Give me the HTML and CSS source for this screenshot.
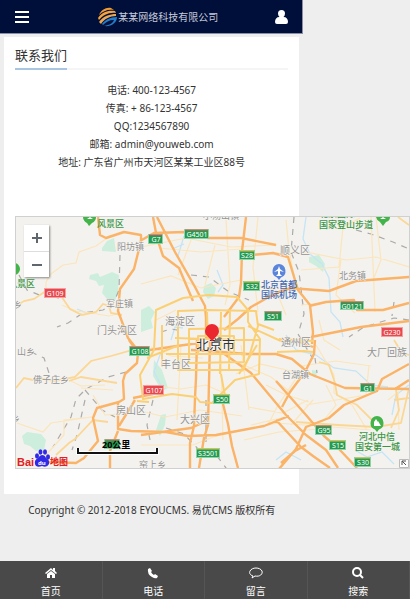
FILE: index.html
```
<!DOCTYPE html>
<html lang="zh-CN">
<head>
    <meta charset="UTF-8">
    <meta name="viewport" content="width=device-width, initial-scale=1.0">
    <title>联系我们</title>
    <link rel="stylesheet" href="styles.css">
</head>
<body>
    <header class="header">
        <button class="iconBtn" aria-label="菜单">
            <svg width="14" height="12" viewBox="0 0 14 12"><path d="M0 1h14M0 6h14M0 11h14" stroke="#fff" stroke-width="2"/></svg>
        </button>
        <a class="logo" href="#">
            <svg width="20" height="20" viewBox="0 0 20 20">
                <path d="M1 8C3 3 8 0 13 1L16 3C10 2 5 4 1 8z" fill="#ef9c35"/>
                <path d="M0 11C4 5 10 3 17 4l1 2C11 5 5 8 1 13z" fill="#f5a33a"/>
                <path d="M1 15C5 9 12 7 18 7v2C12 9 6 12 3 17z" fill="#e9a653"/>
                <path d="M4 17c3-4 8-7 15-7 0 6-6 10-13 9 6-1 9-3 10-6-5 0-8 2-11 5z" fill="#247cc6"/>
            </svg>
            <span>某某网络科技有限公司</span>
        </a>
        <a class="user" href="#" aria-label="会员">
            <svg width="13" height="14" viewBox="0 0 13 14"><path d="M6.500 0a3.500 3.500 0 0 1 3.500 3.500q0 2-1.500 3.500C11.500 7 13 9 13 12q0 2-2 2H2q-2 0-2-2C0 9 1.500 7 4.500 7Q3 5.500 3 3.500a3.500 3.500 0 0 1 3.500-3.500z" fill="#fff"/></svg>
        </a>
    </header>

    <main class="card">
        <div class="titleBar"><h1>联系我们</h1></div>
        <div class="contact">
            <p>电话: 400-123-4567</p>
            <p>传真: + 86-123-4567</p>
            <p>QQ:1234567890</p>
            <p>邮箱: admin@youweb.com</p>
            <p>地址: 广东省广州市天河区某某工业区88号</p>
        </div>

        <div class="map">
            <svg class="mapCanvas" viewBox="15 217 393 251">
                <!-- 绿地和水系 -->
                <g fill="#cdeedd">
                    <path d="M101 248l5-7 7-3 2 14-14-1zM89 275l8-2 2 4 12-5 7 3-1 18-3 8-8-2-5-6 2-8-5 1-3-5-7-2zM21 436l5-4 14 2 5 6-2 10-8 1-6-5-6-2zM140 310l8-4 6 6-4 8 2 8-12 4zM203 286l7-3 5 5-2 8-6 3-5-7zM308 257l10-2 6 9-2 8-7-6-7-4zM155 430l5-15 5-1-1 11-5 11zM153 360l8 10 6 18-6 3-9-15zM311 370l5 1-1 7-4-2z"/>
                </g>
                <g fill="none" stroke="#c5e4f5" stroke-width="1.300">
                    <path d="M305 217l-3 22 7 15 12 10 7 14 2 34 9 10 3 15M285 335l10 15 20 5 18 13 22 3 15 14 17 2M408 385l-13 10-4 20M76 309l10 4 7 0M160 352l-7 20 8 15M171 249l12-5"/>
                    <path d="M170 340l4-13 8 1M275 460l10-8 15 8M354 450l12 7 15-5 12 12M183 236l-6 20M216 270l6 15-5 7"/>
                </g>
                <!-- 铁路 -->
                <g fill="none" stroke="#aaa" stroke-width="1.200" stroke-dasharray="6 6">
                    <path d="M119 255l-1 35-6 14-10 6-20 3-15 10-11 4M18 275l8 15 15 6 17 2M30 352l13 6 5 15 8 4M125 372l-18 5-22 12-10 10-5 18-12 20-6 10M84 400l-8 35-5 15M84 390l17 20 13 7M190 275l18 2 20 15 20 8M293 217l-3 35 8 20 5 42-6 20 15 25M355 230l15 4 22 8 16 7M408 320l-15-2-30 9-15 10M152 400l-6 25 3 15M165 428l18 6 15 16 18 6 15 20M160 332l10-3 12 2M205 400l0 50M314 358l2 15M393 302l-2 14"/>
                </g>
                <!-- 县道 -->
                <g fill="none" stroke="#fbe5bb" stroke-width="1.200">
                    <path d="M110 235l-15 11-17 6-3 11-13 2-12 9-5 8 0 8M61 305l14 6 15 2 18 3 8-2M16 423l26 9 8-9 40-6M45 455l18-20 0-15 28-3M70 381l10 5 24-1M80 388l32 2M92 395l12 20 15-1M140 247l45-9 45 9 46-2M140 284l30-8 30 12 40-8M158 248l42 4 40-3M190 240l-13 35M214 245l-10 40M225 220l4 65-5 20M257 217l-5 50 5 45M250 285l25 5 10 25M275 253l35 0 35 7 30-3 33 10M285 220l3 30 6 30M300 270l38-3 4-40 17-9M340 260l-5 35 19 18M375 217l5 43-8 20M300 305l50-5M318 320l5 20 16 10M155 320l20-10M150 347l20 9 32 2M145 385l35 4 25-4 25 11M144 412l20 5 35-7 42 6M140 445l52 0 20-8 35-8 30-6M240 345l8 65M220 360l2 80M180 345l-4 75M235 374l24-10 40 9M238 363l32 14 18 14M265 385l20 10 23 7M247 407l35 6 25-13M250 425l34-8M267 425l9-18 28-42M243 440l35-8 40-3M300 366l35-5 35 5M305 405l60-10 3-30M290 425l22-25M325 385l10 20-12 15M315 345l18 30 0 18 18 12 15 25M370 430l-25-2-70-5M370 217l4 95M398 430l-1-38-10 8"/>
                </g>
                <g fill="none" stroke="#fbd796" stroke-width="1.800">
                    <path d="M15 306l8-5 10-2 12-8 13 2 11 16 12 6 14-3 7-8 6 2 2 7 11 2M15 388l8-10 9 2 5-2 17 3 20-4 16-16 20-5 18-5 10 5M68 381l12-4 36 6M55 455l13-12 6-4 18-19 15 2M318 362l10 3 6 18 2 12 20 10 15 15M295 422l42 3 38 2 25-4 8-35M395 390l3 20-8 18M393 400l15-2M397 217l11 8M393 340l8 13 7 2"/>
                </g>
                <!-- 高速公路 -->
                <g fill="none" stroke="#fab367" stroke-width="2.400" stroke-linejoin="round">
                    <path d="M97 217l2 18 6 3 18-6 17 3 0 6-7 28-14 20-2 22 10 27 8 10M139 241l14-8 31-1 23 6 33 0 35 7M152 217l4 21 6 18 16 12 14 33M156 217l18 35 20 35 10 19 1 12 0 22M245 217l-4 34-1 32-2 14-15 20M240 256l22-2 10-1 15 4 10 33 12 15 3 27-1 12M223 330l14-11 13-12 16-9 12-6 12-4 12 1 26 2 27-10 54-4M308 306l17-4 28-2 3 10 26 0 26-7M310 337l25-5 25-5 48-6"/>
                    <path d="M128 340l9 13-1 10-12 11-2 7 1 18-5 3-22 6-4 10 5 23-14 17-8 5-27-1M117 402l0 27 13 2 35 1 22 4 28-1 48-9 25-10M117 431l-8 20 0 17M134 400l-16 26M140 435l50-7 18-8M142 351l34-5 22-3M132 398l20-4M196 340l-1 38-1 20-1 28-4 17 0 25M209 340l-2 85-4 13-5 30M222 404l5 20 4 22 6 22M222 353l28 20 20 24 15 18 20 20 20 15 12 18M240 354l35 0 16 5 18 15 35 14 64 1M314 340l-1 14-9 18-15 20-8 15M275 381l30 34 18 21 15 13 18 19M275 420l25 27 12 9 17 12M408 364l-27 15-5 12-33 14-15 13-23 9-10 22-17 20M281 340l15 1 16 6M408 380l-14 9M280 463l14-12 11-6M190 350l18 1 38 3"/>
                </g>
                <!-- 环路 -->
                <g fill="none" stroke="#fbd074" stroke-width="2" stroke-linejoin="round">
                    <path d="M153 350l2-40 27-12 25-3 29 2 11 13 0 12 12 17-1 35-24 6-23 23-12-1-4-5-24-3-29 5-3-24zM177 311l30-1 48 1 2 15-9 31-6 13-65 0zM188 329l55-1 0 34-55 1zM197 336h36v18h-36zM174 338l30 1 54 1M206 312l1 28M161 367l0-42M220 312l-1 62M229 310l-1 60M165 354l80 0M257 324l16 6M247 326l35 16 25-2M146 358l30-12M148 402l-12-1"/>
                    <path d="M276 352l27-1 9 1M278 339l34 2M220 374l5 28M256 345l-18 29"/>
                </g>
                <!-- 路牌 -->
                <g class="sign">
                    <g fill="#259b50" stroke="#8fd1a8"><rect x="147.500" y="234.500" width="14" height="9"/><rect x="183.500" y="229.500" width="24" height="9"/><rect x="238.500" y="250.500" width="15" height="9"/><rect x="242.500" y="281.500" width="16" height="9"/><rect x="263.500" y="311.500" width="17" height="9"/><rect x="339.500" y="301.500" width="23" height="8"/><rect x="128.500" y="346.500" width="20" height="9"/><rect x="212.500" y="394.500" width="16" height="9"/><rect x="195.500" y="448.500" width="23" height="9"/><rect x="359.500" y="383.500" width="14" height="8"/><rect x="314.500" y="425.500" width="16" height="9"/><rect x="328.500" y="440.500" width="16" height="9"/><rect x="353.500" y="457.500" width="16" height="9"/><rect x="103.500" y="439.500" width="15" height="9"/></g>
                    <g fill="#e8484e" stroke="#f2a0a2"><rect x="43.500" y="288.500" width="21" height="9"/><rect x="142.500" y="385.500" width="20" height="9"/><rect x="380.500" y="327.500" width="21" height="9"/></g>
                    <path d="M148 235h13M184 230h23M264 312h16M340 302h22M129 347h19M360 384h13M315 426h15M104 440h14" stroke="#dd5753"/>
                    <path d="M239 251h14M243 282h15M213 395h15M196 449h22M329 441h15M354 458h15" stroke="#e2bf3d"/>
                    <text x="155" y="242">G7</text><text x="196" y="237">G4501</text><text x="246" y="258">S28</text><text x="251" y="289">S32</text><text x="272" y="319">S51</text><text x="351" y="309">G0121</text><text x="139" y="354">G108</text><text x="221" y="402">S50</text><text x="207" y="456">S3501</text><text x="367" y="391">G1</text><text x="323" y="433">G95</text><text x="337" y="448">S15</text><text x="362" y="465">S30</text><text x="54" y="296">G109</text><text x="153" y="393">G107</text><text x="391" y="335">G230</text>
                </g>
                <!-- 地名 -->
                <g class="place">
                    <text x="116" y="250">阳坊镇</text><text x="279" y="254" class="district">顺义区</text><text x="338" y="279">北务镇</text><text x="105" y="307">军庄镇</text><text x="164" y="325" class="district">海淀区</text><text x="96" y="334" class="district">门头沟区</text><text x="16" y="355">山乡</text><text x="32" y="383">佛子庄乡</text><text x="160" y="368" class="district">丰台区</text><text x="280" y="346" class="district">通州区</text><text x="366" y="356" class="district">大厂回族</text><text x="281" y="378">台湖镇</text><text x="115" y="414" class="district">房山区</text><text x="179" y="423" class="district">大兴区</text><text x="138" y="468">窑上乡</text><text x="12" y="308">乡</text><text x="10" y="422">乡</text><text x="202" y="219">小汤山镇</text>
                    <text x="195" y="349" class="city">北京市</text>
                </g>
                <g class="scenic"><text x="96" y="216">八达岭</text><text x="96" y="227">风景区</text><text x="7" y="287">风景区</text><text x="318" y="217">北京国际</text><text x="318" y="228">国家登山步道</text><text x="358" y="440">河北中信</text><text x="354" y="450">国安第一城</text></g>
                <g class="airport"><text x="260" y="288">北京首都</text><text x="260" y="298">国际机场</text></g>
                <g fill="#42b449"><path d="M82 217a7 7 0 0 0 4 6l2 3 3-3q4-2 4-6zM375 217a7 7 0 0 0 4 5l3 4 3-4q4-1 4-5zM376 416a7 7 0 0 1 2 13.500l-2 2.500-2-2.500a7 7 0 0 1 2-13.500z"/><circle cx="13" cy="269" r="6"/></g>
                <path d="M373 426v-4l2-3 2 3v4zM377 426v-5l3 5zM379 219l3-2 3 2M86 219l3-2 3 2" fill="#fff"/>
                <path d="M278 264a7 7 0 0 1 2 13.500l-2 2.500-2-2.500a7 7 0 0 1 2-13.500z" fill="#5b85dc"/><path d="M278 266l1 3 4 3-4-1v3l2 2h-6l2-2v-3l-4 1 4-3z" fill="#fff"/>
                <path d="M212 342l6-5 3 1-3 5z" fill="#777"/><path d="M211 342c-2-5-7-6-7-11a7 7 0 0 1 14 0c0 5-5 6-7 11z" fill="#eb2830"/>
                <!-- 比例尺 -->
                <path d="M77 448v5h79v-5" fill="none" stroke="#fff" stroke-width="4"/><path d="M77 448v5h79v-5" fill="none" stroke="#111" stroke-width="2"/>
                <text x="101" y="448" class="scale">20公里</text>
                <!-- 百度地图 -->
                <text x="16" y="466" class="baidu">Bai</text><text x="49" y="465" class="baiduMap">地图</text>
                <g fill="#3029e5"><ellipse cx="36" cy="456" rx="2" ry="2.700"/><ellipse cx="39.500" cy="452" rx="2" ry="2.700"/><ellipse cx="44" cy="452" rx="2" ry="2.700"/><ellipse cx="47" cy="457" rx="2" ry="2.700"/><path d="M41 455q3 0 4 3 4 2 3 6-2 4-7 2-6 2-7-2-1-4 3-6 2-3 4-3z"/></g>
                <text x="37" y="465" class="du">du</text>
                <path d="M398.500 459.500h9v8h-9z" fill="#fff" stroke="#bbb"/><path d="M401 465v-4h4M401 461l4 4" fill="none" stroke="#555"/>
            </svg>
            <div class="zoomBox">
                <button aria-label="放大"><svg width="12" height="12" viewBox="0 0 12 12"><path d="M6 1v10M1 6h10" stroke="#60666e" stroke-width="2"/></svg></button>
                <button aria-label="缩小"><svg width="12" height="12" viewBox="0 0 12 12"><path d="M1 6h10" stroke="#60666e" stroke-width="2"/></svg></button>
            </div>
        </div>
    </main>

    <footer class="copyright">Copyright © 2012-2018 EYOUCMS. 易优CMS 版权所有</footer>

    <nav class="bottomNav">
        <a href="#">
            <svg width="12" height="12" viewBox="0 0 12 12"><path d="M0 6l6-5 2 2V1h2v3l2 2-1 1-5-4-5 4zM2 7l4-3 4 3v4H7V8H5v3H2z" fill="#fff"/></svg>
            <span>首页</span>
        </a>
        <a href="#">
            <svg width="12" height="12" viewBox="0 0 12 12"><path d="M3 1L1 2q-1 5 4 8 3 2 5 1l1-2-3-2-1 1Q5 7 4 5l1-1z" fill="#fff"/></svg>
            <span>电话</span>
        </a>
        <a href="#">
            <svg width="14" height="12" viewBox="0 0 14 12"><path d="M4 9C1 8 0 6 1 4c2-4 10-4 12 0 1 3-2 6-7 5l-3 2z" fill="none" stroke="#fff"/></svg>
            <span>留言</span>
        </a>
        <a href="#">
            <svg width="12" height="12" viewBox="0 0 12 12"><circle cx="5" cy="5" r="4" fill="none" stroke="#fff" stroke-width="2"/><path d="M8 8l3 3" stroke="#fff" stroke-width="2"/></svg>
            <span>搜索</span>
        </a>
    </nav>
</body>
</html>
```
FILE: styles.css
```
* {
    box-sizing: border-box;
}
body {
    margin: 0;
    min-height: 100vh;
    display: flex;
    flex-direction: column;
    background-color: #eee;
    color: #333;
    font-family: "Noto Sans", "Noto Sans CJK SC", sans-serif;
    font-size: 10px;
    line-height: 18px;
    overflow-x: hidden;
}
a {
    color: inherit;
    text-decoration: none;
}
button {
    padding: 0;
    border: 0;
    background: none;
}
svg {
    display: block;
}

.header {
    display: flex;
    align-items: center;
    width: 74%;
    height: 34px;
    padding: 0 14px 0 15px;
    background-color: #000e3a;
    border-bottom: 1px solid #8a8fa8;
    border-right: 1px solid #8a8fa8;
}
.logo {
    display: flex;
    align-items: center;
    margin: 0 auto;
    padding-left: 12px;
    color: #c5cad8;
}

.card {
    width: 72%;
    margin: 3px 4px 0;
    padding: 7px 11px 25px;
    background-color: #fff;
}
.titleBar {
    display: flex;
    border-bottom: 2px solid #f5f5f5;
}
.titleBar h1 {
    margin: 0 0 -2px;
    font-size: 13px;
    font-weight: normal;
    line-height: 22px;
    border-bottom: 2px solid #a9c5e2;
    padding-bottom: 2px;
}
.contact {
    padding: 11px 0 45px;
    text-align: center;
}
.contact p {
    margin: 0;
}

.map {
    position: relative;
    width: calc(100vw - 15px);
    border: 1px solid #d0d0d0;
    background-color: #f4f2ee;
}
.mapCanvas {
    width: 100%;
    height: auto;
}
.zoomBox {
    position: absolute;
    top: 8px;
    left: 8px;
    width: 25px;
    background-color: #fff;
    box-shadow: 1px 1px 2px #888;
}
.zoomBox button {
    display: flex;
    align-items: center;
    justify-content: center;
    width: 100%;
    height: 26px;
}
.zoomBox button + button {
    border-top: 1px solid #ddd;
}
.sign text {
    fill: #fff;
    font-size: 7px;
    text-anchor: middle;
}
.place text {
    fill: #939393;
    font-size: 9px;
    stroke: #f7f5f1;
    stroke-width: 1px;
    paint-order: stroke;
}
.place .district {
    font-size: 10px;
}
.place .city {
    fill: #333;
    font-size: 13px;
}
.scenic,
.airport {
    font-size: 9px;
    font-weight: 500;
    fill: #3a9645;
}
.airport {
    fill: #4169b5;
}
.scale {
    font-size: 9px;
    font-weight: bold;
}
.baidu {
    fill: #e22020;
    font-family: "Liberation Sans", sans-serif;
    font-size: 11px;
    font-weight: bold;
}
.baiduMap {
    fill: #e22020;
    font-size: 9px;
    font-weight: bold;
}
.du {
    fill: #fff;
    font-size: 6px;
    font-weight: bold;
}

.copyright {
    width: 74%;
    padding-top: 7px;
    text-align: center;
    white-space: nowrap;
}

.bottomNav {
    display: flex;
    margin-top: auto;
    color: #fff;
    background-color: #494949;
}
.bottomNav a {
    flex: 1;
    display: flex;
    flex-direction: column;
    align-items: center;
    padding: 6px 0 0;
    gap: 4px;
    line-height: 16px;
    border-right: 1px solid #555;
}
```
